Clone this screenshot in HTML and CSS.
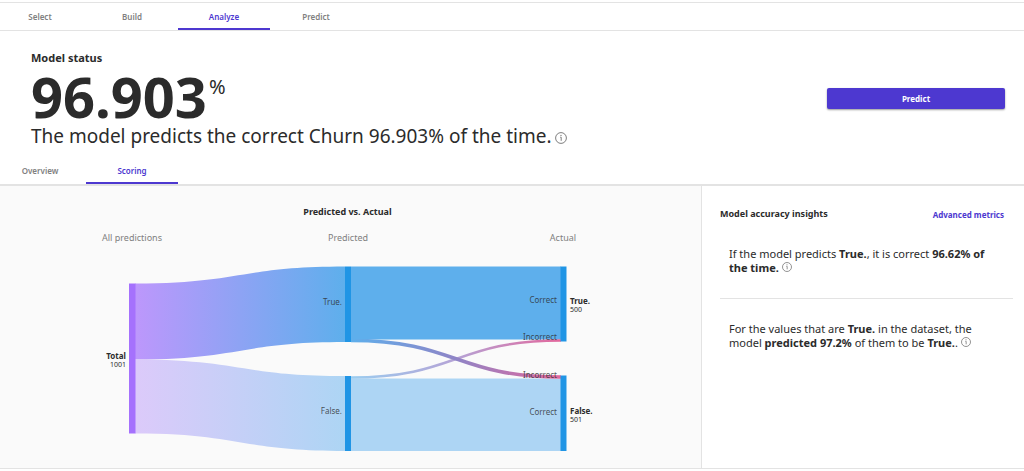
FILE: index.html
```
<!DOCTYPE html>
<html lang="en">
    <head>
        <meta charset="utf-8" />
        <meta name="viewport" content="width=device-width, initial-scale=1" />
        <title>Model status</title>
        <link rel="stylesheet" href="styles.css">
    </head>

    <body>
        <nav class="tabs main-tabs">
            <a href="#select">Select</a>
            <a href="#build">Build</a>
            <a href="#analyze" class="active">Analyze</a>
            <a href="#predict">Predict</a>
        </nav>

        <header class="status">
            <div>
                <h1>Model status</h1>
                <p class="score">96.903<span>%</span></p>
                <p class="summary">
                    The model predicts the correct Churn 96.903% of the time.
                    <svg class="info" viewBox="0 0 12 12"><use href="#info" /></svg>
                </p>
            </div>
            <button type="button" class="predict">Predict</button>
        </header>

        <nav class="tabs sub-tabs">
            <a href="#overview">Overview</a>
            <a href="#scoring" class="active">Scoring</a>
        </nav>

        <main>
            <section class="chart">
                <h2>Predicted vs. Actual</h2>
                <svg class="sankey" viewBox="0 0 701 246">
                    <defs>
                        <linearGradient id="total_true">
                            <stop offset="0" stop-color="#bd97fc" />
                            <stop offset="1" stop-color="#5eafec" />
                        </linearGradient>
                        <linearGradient id="total_false">
                            <stop offset="0" stop-color="#dccafa" />
                            <stop offset="1" stop-color="#add5f4" />
                        </linearGradient>
                        <linearGradient id="true_false" gradientUnits="userSpaceOnUse" x1="351" x2="561">
                            <stop offset="0" stop-color="#5eafec" />
                            <stop offset="0.5" stop-color="#8f84c6" />
                            <stop offset="1" stop-color="#e2679c" />
                        </linearGradient>
                        <linearGradient id="false_true" gradientUnits="userSpaceOnUse" x1="351" x2="561">
                            <stop offset="0" stop-color="#9bcdf0" />
                            <stop offset="0.5" stop-color="#b5a3d6" />
                            <stop offset="1" stop-color="#e2679c" />
                        </linearGradient>
                        <symbol id="info" viewBox="0 0 12 12">
                            <circle cx="6" cy="6" r="5.4" fill="none" stroke="currentColor" stroke-width="0.9" />
                            <path d="M5.2 5.2H6.2V8.8" fill="none" stroke="currentColor" stroke-width="0.9" />
                            <circle cx="6" cy="3.4" r="0.6" fill="currentColor" />
                        </symbol>
                    </defs>

                    <!-- Links. -->
                    <path fill="url(#total_true)" d="M135 61.5C240 61.5 240 44.5 345 44.5V120C240 120 240 137.5 135 137.5Z" />
                    <path fill="url(#total_false)" d="M135 137.5C240 137.5 240 154 345 154V229C240 229 240 211.5 135 211.5Z" />
                    <path fill="#5eafec" d="M351 44.5H561V117.5H351Z" />
                    <path fill="#add5f4" d="M351 156.5H561V229H351Z" />
                    <path class="cross" stroke="url(#false_true)" stroke-width="2.5" d="M351 155.5C456 155.5 456 118.5 561 118.5" />
                    <path class="cross" stroke="url(#true_false)" stroke-width="3.5" d="M351 118.5C456 118.5 456 155 561 155" />

                    <!-- Nodes. -->
                    <rect class="total" x="129" y="61.5" width="6.5" height="150" />
                    <rect class="node" x="345" y="44.5" width="6" height="75.5" />
                    <rect class="node" x="345" y="154" width="6" height="75" />
                    <rect class="node" x="560.5" y="44.5" width="6" height="75" />
                    <rect class="node" x="560.5" y="153.5" width="6" height="75.5" />

                    <g class="columns">
                        <text x="132" y="19">All predictions</text>
                        <text x="348" y="19">Predicted</text>
                        <text x="563" y="19">Actual</text>
                    </g>
                    <g class="labels">
                        <text x="342" y="83">True.</text>
                        <text x="342" y="192">False.</text>
                        <text x="557" y="81">Correct</text>
                        <text x="557" y="118">Incorrect</text>
                        <text x="557" y="156">Incorrect</text>
                        <text x="557" y="193">Correct</text>
                    </g>
                    <g class="counts">
                        <text x="126" y="137" class="name left">Total</text>
                        <text x="126" y="145" class="left">1001</text>
                        <text x="570" y="82" class="name">True.</text>
                        <text x="570" y="90">500</text>
                        <text x="570" y="192" class="name">False.</text>
                        <text x="570" y="200">501</text>
                    </g>
                </svg>
            </section>

            <aside class="insights">
                <div class="insights-header">
                    <h2>Model accuracy insights</h2>
                    <a href="#advanced">Advanced metrics</a>
                </div>
                <p>
                    If the model predicts <b>True.</b>, it is correct <b>96.62% of the time.</b>
                    <svg class="info" viewBox="0 0 12 12"><use href="#info" /></svg>
                </p>
                <p>
                    For the values that are <b>True.</b> in the dataset, the model <b>predicted 97.2%</b> of them to be <b>True.</b>.
                    <svg class="info" viewBox="0 0 12 12"><use href="#info" /></svg>
                </p>
            </aside>
        </main>
    </body>
</html>
```

FILE: styles.css
```
* {
    box-sizing: border-box;
}

body {
    margin: 0;
    padding-top: 2px;
    font-family: 'Noto Sans', 'Open Sans', sans-serif;
    color: #2b2b2b;
    background-color: white;
}

h1,
h2,
p {
    margin: 0;
}

a {
    color: #4d38d0;
    text-decoration: none;
}

.tabs {
    display: flex;
    padding-left: 86px;
    border-bottom: 1px solid #e3e3e3;
}

.tabs a {
    width: 92px;
    height: 27px;
    border-bottom: 2px solid transparent;
    font-size: 8px;
    font-weight: 600;
    line-height: 27px;
    text-align: center;
    color: #808080;
}

.tabs a:first-child {
    margin-left: -92px;
}

.tabs a.active {
    color: #4d38d0;
    border-bottom-color: #4d38d0;
}

.main-tabs {
    border-top: 1px solid #e3e3e3;
}

.sub-tabs {
    border-bottom-width: 2px;
}

.status {
    display: flex;
    align-items: center;
    justify-content: space-between;
    padding: 18px 19px 10px 31px;
}

h1 {
    font-size: 11px;
    line-height: 18px;
}

.score {
    display: flex;
    font-size: 56px;
    font-weight: bold;
    line-height: 58px;
}

.score span {
    padding-left: 2px;
    font-size: 20px;
    font-weight: normal;
    line-height: 40px;
}

.summary {
    font-size: 19px;
    line-height: 22px;
}

.info {
    width: 10px;
    height: 10px;
    color: #707070;
}

.summary .info {
    width: 12px;
    height: 12px;
    margin-left: -1px;
    vertical-align: -1px;
}

.predict {
    width: 178px;
    height: 21px;
    padding: 0;
    border: 0;
    border-radius: 2px;
    font-family: inherit;
    font-size: 8px;
    font-weight: bold;
    color: white;
    background-color: #4d38d0;
    box-shadow: 0 1px 2px rgba(0, 0, 0, 0.4);
}

main {
    display: flex;
    border-bottom: 1px solid #e3e3e3;
}

.chart {
    flex: 1;
    padding-top: 18px;
    background-color: #fafafa;
}

h2 {
    font-size: 9px;
    line-height: 16px;
}

.chart h2 {
    padding: 0 6px 2px 0;
    text-align: center;
}

.sankey {
    display: block;
    width: 100%;
    font-size: 8px;
}

.cross {
    fill: none;
}

.total {
    fill: #a571fd;
}

.node {
    fill: #2095e5;
}

.columns {
    font-size: 9px;
    text-anchor: middle;
    fill: #808080;
}

.labels {
    text-anchor: end;
    fill: #2b2b2b;
    fill-opacity: 0.8;
}

.counts {
    font-size: 7px;
    fill: #2b2b2b;
}

.name {
    font-size: 8px;
    font-weight: bold;
}

.left {
    text-anchor: end;
}

.insights {
    width: 323px;
    padding: 20px 11px 0 18px;
    border-left: 1px solid #e3e3e3;
}

.insights-header {
    display: flex;
    align-items: center;
    justify-content: space-between;
    padding-right: 9px;
}

.insights-header a {
    font-size: 8px;
    font-weight: bold;
}

.insights p {
    padding: 25px 9px 23px;
    font-size: 11px;
    line-height: 14px;
}

.insights p + p {
    border-top: 1px solid #e3e3e3;
    padding-top: 23px;
}
```
